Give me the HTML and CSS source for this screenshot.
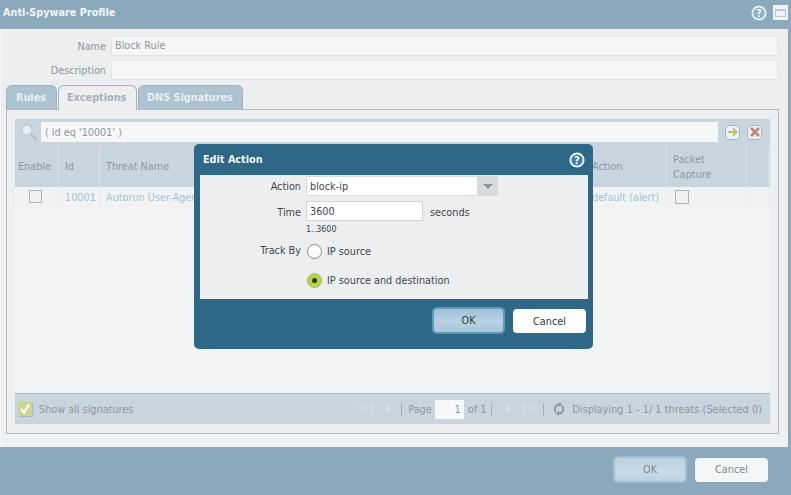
FILE: index.html
```html
<!DOCTYPE html>
<html lang="en">
<head>
    <meta charset="UTF-8">
    <meta name="viewport" content="width=device-width, initial-scale=1.0">
    <title>Anti-Spyware Profile</title>
    <link rel="stylesheet" href="styles.css">
</head>
<body>
<div class="window">
    <div class="title-bar">
        <span class="title">Anti-Spyware Profile</span>
        <svg class="help-icon" width="16" height="16" viewBox="0 0 16 16">
            <circle cx="8" cy="8" r="6.6" fill="#8fb0c6" stroke="#e4edf2" stroke-width="2"/>
            <text x="8" y="11.5" text-anchor="middle" class="help-mark">?</text>
        </svg>
        <div class="max-btn"><span></span></div>
    </div>

    <div class="panel">
        <div class="field-row">
            <label class="field-label">Name</label>
            <div class="field-input">Block Rule</div>
        </div>
        <div class="field-row">
            <label class="field-label">Description</label>
            <div class="field-input"></div>
        </div>

        <div class="tabs">
            <div class="tab">Rules</div>
            <div class="tab active">Exceptions</div>
            <div class="tab">DNS Signatures</div>
        </div>

        <div class="tab-body">
            <div class="grid">
                <div class="search-bar">
                    <svg class="search-icon" width="18" height="18" viewBox="0 0 18 18">
                        <circle cx="7" cy="7" r="5" fill="#e4eef5" stroke="#b9d0e0" stroke-width="1.5"/>
                        <path d="M11 11l5 5" stroke="#c9bda0" stroke-width="2.4" stroke-linecap="round"/>
                    </svg>
                    <div class="search-input">( id eq '10001' )</div>
                    <div class="icon-btn">
                        <svg width="12" height="12" viewBox="0 0 12 12"><path d="M1 6h8M6 2.500L9.800 6 6 9.500" fill="none" stroke="#b9c27a" stroke-width="1.800"/></svg>
                    </div>
                    <div class="icon-btn">
                        <svg width="12" height="12" viewBox="0 0 12 12"><path d="M2 2l8 8M10 2l-8 8" stroke="#bd8578" stroke-width="2.600"/></svg>
                    </div>
                </div>

                <div class="grid-head">
                    <div class="col col-enable">Enable</div>
                    <div class="col col-id">Id</div>
                    <div class="col col-name">Threat Name</div>
                    <div class="col col-action">Action</div>
                    <div class="col col-capture">Packet<br>Capture</div>
                    <div class="col col-rest"></div>
                </div>

                <div class="grid-row">
                    <div class="col col-enable"><span class="check"></span></div>
                    <div class="col col-id link">10001</div>
                    <div class="col col-name link">Autorun User-Agent Traffic</div>
                    <div class="col col-action link">default (alert)</div>
                    <div class="col col-capture"><span class="check"></span></div>
                    <div class="col col-rest"></div>
                </div>

                <div class="grid-space"></div>

                <div class="grid-foot">
                    <span class="check-on">
                        <svg width="14" height="14" viewBox="0 0 14 14"><path d="M3 7l3 3.500L11 2.500" fill="none" stroke="#f6f8ea" stroke-width="2.400"/></svg>
                    </span>
                    <span class="show-all">Show all signatures</span>
                    <div class="pager">
                        <svg class="pg-icon" width="15" height="12" viewBox="0 0 15 12"><path d="M1 1v10M7 1.500L3 6l4 4.500zM13 1.500L9 6l4 4.500z" fill="none" stroke="#d6e0e6"/></svg>
                        <svg class="pg-icon" width="8" height="12" viewBox="0 0 8 12"><path d="M6 1.500L2 6l4 4.500z" fill="#d6e0e6"/></svg>
                        <span class="pg-sep"></span>
                        <span class="pg-page">Page</span>
                        <span class="page-box">1</span>
                        <span class="pg-of">of 1</span>
                        <span class="pg-sep pg-sep-wide"></span>
                        <svg class="pg-icon" width="8" height="12" viewBox="0 0 8 12"><path d="M2 1.500L6 6l-4 4.500z" fill="#d6e0e6"/></svg>
                        <svg class="pg-icon pg-last" width="15" height="12" viewBox="0 0 15 12"><path d="M14 1v10M8 1.500L12 6l-4 4.500zM2 1.500L6 6l-4 4.500z" fill="none" stroke="#d6e0e6"/></svg>
                        <span class="pg-sep pg-sep-mid"></span>
                        <svg class="pg-icon pg-refresh" width="12" height="14" viewBox="0 0 12 14"><path d="M6 2.500A4.500 4.500 0 0 0 3 10M6 11.500A4.500 4.500 0 0 0 9 4" fill="none" stroke="#8d9aa3" stroke-width="2"/><path d="M6 0v5L9.500 2.500zM6 9v5l-3.500-2.500z" fill="#8d9aa3"/></svg>
                        <span class="pg-status">Displaying 1 - 1/ 1 threats (Selected 0)</span>
                    </div>
                </div>
            </div>
        </div>
    </div>

    <div class="window-buttons">
        <div class="btn btn-primary faded">OK</div>
        <div class="btn faded">Cancel</div>
    </div>
</div>

<div class="dialog">
    <div class="dialog-title">
        <span>Edit Action</span>
        <svg width="16" height="16" viewBox="0 0 16 16">
            <circle cx="8" cy="8" r="6.600" fill="#3c7fa8" stroke="#eef6fa" stroke-width="2"/>
            <text x="8" y="11.500" text-anchor="middle" class="help-mark">?</text>
        </svg>
    </div>
    <div class="dialog-body">
        <div class="form-row">
            <label class="form-label">Action</label>
            <div class="select">
                <span class="select-value">block-ip</span>
                <span class="select-arrow"></span>
            </div>
        </div>
        <div class="form-row time-row">
            <label class="form-label">Time</label>
            <div class="text-input">3600</div>
            <span class="unit">seconds</span>
        </div>
        <div class="hint">1..3600</div>
        <div class="form-row track-row">
            <label class="form-label">Track By</label>
            <div class="radio-list">
                <div class="radio-item"><span class="radio"></span>IP source</div>
                <div class="radio-item"><span class="radio selected"></span>IP source and destination</div>
            </div>
        </div>
    </div>
    <div class="dialog-buttons">
        <div class="btn btn-primary">OK</div>
        <div class="btn">Cancel</div>
    </div>
</div>
</body>
</html>
```

FILE: styles.css
```css
:root {
    --frame: #8ca9bc;
    --panel: #eceef0;
    --dialog: #2f6786;
    --grid-bar: #c8d5de;
    --line: #b4bcc1;
    --muted: #8f979c;
}

* {
    box-sizing: border-box;
}

html, body {
    margin: 0;
    height: 100%;
    overflow: hidden;
}

body {
    position: relative;
    width: 791px;
    height: 495px;
    background: var(--frame);
    font-family: "DejaVu Sans", sans-serif;
    font-size: 9.7px;
    color: var(--muted);
}

.title-bar {
    height: 29px;
    display: flex;
    align-items: center;
    padding: 0 3px 4px 3px;
}

.title {
    flex: 1;
    color: #f2f6f8;
    font-weight: bold;
}

.help-mark {
    font-family: "DejaVu Sans", sans-serif;
    font-size: 10px;
    font-weight: bold;
    fill: #eef6fa;
}

.help-icon {
    margin-right: 6px;
}

.max-btn {
    width: 15px;
    height: 15px;
    background: #eef3f6;
    display: flex;
    align-items: center;
    justify-content: center;
}

.max-btn span {
    width: 11px;
    height: 8px;
    border: 1px solid #b7c8d3;
    border-top-width: 2px;
}

.panel {
    width: 788px;
    height: 418px;
    background: linear-gradient(var(--panel) 404px, #eef1f3 404px);
    padding: 7px 0 0 5px;
    border-left: 1px solid #f4f5f6;
}

.field-row {
    display: flex;
    align-items: center;
    height: 20px;
    margin-bottom: 4px;
}

.field-label {
    width: 105px;
    text-align: right;
    padding-right: 5px;
}

.field-input {
    width: 667px;
    height: 20px;
    background: #f4f5f6;
    border: 1px solid #e2e5e6;
    padding: 2px 3px;
    line-height: 14px;
}

.tabs {
    display: flex;
    margin-top: 5px;
    height: 24px;
    gap: 1px;
}

.tab {
    height: 24px;
    padding: 0 8px;
    line-height: 24px;
    background: #aec3d1;
    color: #e8eef2;
    font-weight: bold;
    border: 1px solid #9fb3c0;
    border-bottom: none;
    border-radius: 6px 6px 0 0;
    white-space: nowrap;
}

.tab:first-child {
    width: 51px;
    padding-left: 9px;
}

.tab.active {
    width: 79px;
    height: 25px;
    background: var(--panel);
    color: #a9b1b6;
    position: relative;
    z-index: 1;
}

.tab:last-child {
    width: 105px;
}

.tab-body {
    width: 773px;
    height: 325px;
    border: 1px solid var(--line);
    padding: 9px 8px;
}

.grid {
    width: 755px;
    height: 305px;
    background: #f1f3f5;
    display: flex;
    flex-direction: column;
}

.search-bar {
    height: 26px;
    flex: none;
    background: var(--grid-bar);
    display: flex;
    align-items: center;
    padding: 0 8px 0 5px;
}

.search-icon {
    margin-right: 3px;
}

.search-input {
    width: 677px;
    height: 20px;
    background: #f4f6f7;
    padding: 0 4px;
    line-height: 21px;
    margin-right: 7px;
}

.icon-btn {
    width: 15px;
    height: 15px;
    background: #eef1f2;
    border: 1px solid #a9b3c0;
    border-radius: 4px;
    margin-right: 7px;
    display: flex;
    align-items: center;
    justify-content: center;
}

.icon-btn:last-child {
    margin-right: 0;
}

.grid-head {
    height: 42px;
    flex: none;
    display: flex;
    background: var(--grid-bar);
}

.grid-head .col {
    display: flex;
    align-items: center;
    line-height: 15px;
    border-right: 1px solid #dae2e7;
    padding: 1px 0 0 6px;
}

.grid-head .col-enable {
    padding-left: 3px;
}

.grid-row {
    height: 21px;
    flex: none;
    display: flex;
    background: #f0f2f4;
}

.grid-row .col {
    display: flex;
    align-items: center;
    padding-left: 6px;
    border-right: 1px solid #e9ecee;
    white-space: nowrap;
    overflow: hidden;
}

.col-enable {
    width: 44px;
}

.col-id {
    width: 41px;
}

.col-name {
    width: 200px;
}

.col-action {
    width: 367px;
}

.col-capture {
    width: 80px;
}

.col-rest {
    width: 22px;
}

.grid-head .col-action,
.grid-row .col-action {
    padding-left: 292px;
}

.grid-row .col-enable {
    padding-left: 14px;
}

.grid-row .col-capture {
    padding-left: 8px;
}

.link {
    color: #a9c2d2;
}

.check {
    width: 14px;
    height: 14px;
    background: #eef0f1;
    border: 1px solid #aeb5ba;
    margin-bottom: 2px;
}

.col-enable .check {
    width: 13px;
    height: 13px;
}

.grid-space {
    flex: 1;
}

.grid-foot {
    height: 31px;
    flex: none;
    background: var(--grid-bar);
    border-top: 1px solid var(--line);
    display: flex;
    align-items: center;
    padding: 0 8px 0 3px;
}

.check-on {
    width: 14px;
    height: 14px;
    background: #c9d68f;
    display: flex;
    box-shadow: 1px 1px 1px #aeb9bb;
    margin-right: 7px;
}

.show-all {
    flex: 1;
}

.pager {
    display: flex;
    align-items: center;
}

.pg-status {
    letter-spacing: 0.05px;
}

.pg-icon {
    margin-right: 9px;
}

.pg-last {
    margin-right: 5px;
}

.pg-refresh {
    margin-right: 7px;
}

.pg-sep {
    width: 1px;
    height: 13px;
    background: #a4afb6;
    margin: 0 6px 0 1px;
}

.pg-sep-wide {
    margin-right: 13px;
}

.pg-sep-mid {
    margin-right: 9px;
}

.pg-page {
    margin-right: 3px;
}

.pg-of {
    margin-right: 4px;
}

.page-box {
    width: 29px;
    height: 19px;
    background: #f6f8f9;
    margin-right: 4px;
    text-align: right;
    line-height: 19px;
    padding-right: 3px;
}

.window-buttons {
    display: flex;
    justify-content: flex-end;
    align-items: center;
    gap: 8px;
    padding: 9px 23px 0 0;
}

.btn {
    width: 73px;
    height: 24px;
    background: #fdfefe;
    border-radius: 4px;
    color: #333b40;
    text-align: center;
    line-height: 24px;
}

.btn-primary {
    height: 27px;
    background: linear-gradient(#a0c0d6, #b8d2e3 55%, #a9c6da);
    border: 2px solid #5f9abb;
    border-radius: 5px;
    line-height: 23px;
}

.btn.faded {
    background: #f3f5f7;
    color: #7f8a91;
}

.btn-primary.faded {
    background: linear-gradient(#bcd0de, #c8dae6 55%, #bcd3e2);
    border-color: #9cc0d6;
    width: 74px;
}

.dialog {
    position: absolute;
    left: 194px;
    top: 144px;
    width: 399px;
    height: 205px;
    background: var(--dialog);
    border-radius: 5px;
    color: #40484d;
    display: flex;
    flex-direction: column;
}

.dialog-title {
    height: 31px;
    flex: none;
    display: flex;
    align-items: center;
    justify-content: space-between;
    padding: 0 8px 0 9px;
    color: #f2f7fa;
    font-weight: bold;
}

.dialog-body {
    margin: 0 5px 0 6px;
    height: 124px;
    background: #eceef0;
    flex: none;
    padding-top: 1px;
}

.form-row {
    display: flex;
    align-items: center;
}

.form-label {
    width: 106px;
    padding-right: 5px;
    text-align: right;
}

.select {
    width: 192px;
    height: 20px;
    background: #fff;
    border: 1px solid #d6dadd;
    display: flex;
    align-items: center;
    padding-left: 3px;
}

.select-value {
    flex: 1;
}

.select-arrow {
    width: 21px;
    height: 20px;
    margin-right: -1px;
    background: #d6dadd;
    display: flex;
    align-items: center;
    justify-content: center;
}

.select-arrow::after {
    content: "";
    border-left: 5px solid transparent;
    border-right: 5px solid transparent;
    border-top: 5px solid #8b9296;
}

.time-row {
    margin-top: 5px;
}

.time-row .form-label,
.unit {
    padding-top: 2px;
}

.text-input {
    width: 117px;
    height: 20px;
    background: #fff;
    border: 1px solid #d0d4d7;
    padding-left: 3px;
    line-height: 20px;
}

.unit {
    margin-left: 7px;
}

.hint {
    margin: 3px 0 0 106px;
    font-size: 8px;
    height: 12px;
    line-height: 12px;
}

.track-row {
    align-items: flex-start;
    margin-top: 6px;
}

.track-row .form-label {
    line-height: 18px;
}

.radio-list {
    display: flex;
    flex-direction: column;
    gap: 12px;
}

.radio-item {
    display: flex;
    align-items: center;
    height: 16px;
    margin-top: 1px;
}

.radio {
    width: 15px;
    height: 15px;
    border-radius: 50%;
    background: #fff;
    border: 1.5px solid #7f8b92;
    margin: 0 5px 0 1px;
    display: flex;
    align-items: center;
    justify-content: center;
}

.radio.selected {
    background: #bcd33c;
    border-color: #a4b28a;
}

.radio.selected::after {
    content: "";
    width: 5px;
    height: 5px;
    border-radius: 50%;
    background: #2d3a20;
}

.dialog-buttons {
    display: flex;
    justify-content: flex-end;
    align-items: center;
    gap: 8px;
    padding: 8px 7px 0 0;
}

.dialog-buttons .btn {
    line-height: 25px;
    margin-top: 1px;
}

.dialog-buttons .btn-primary {
    margin-top: 0;
    line-height: 24px;
}
```
